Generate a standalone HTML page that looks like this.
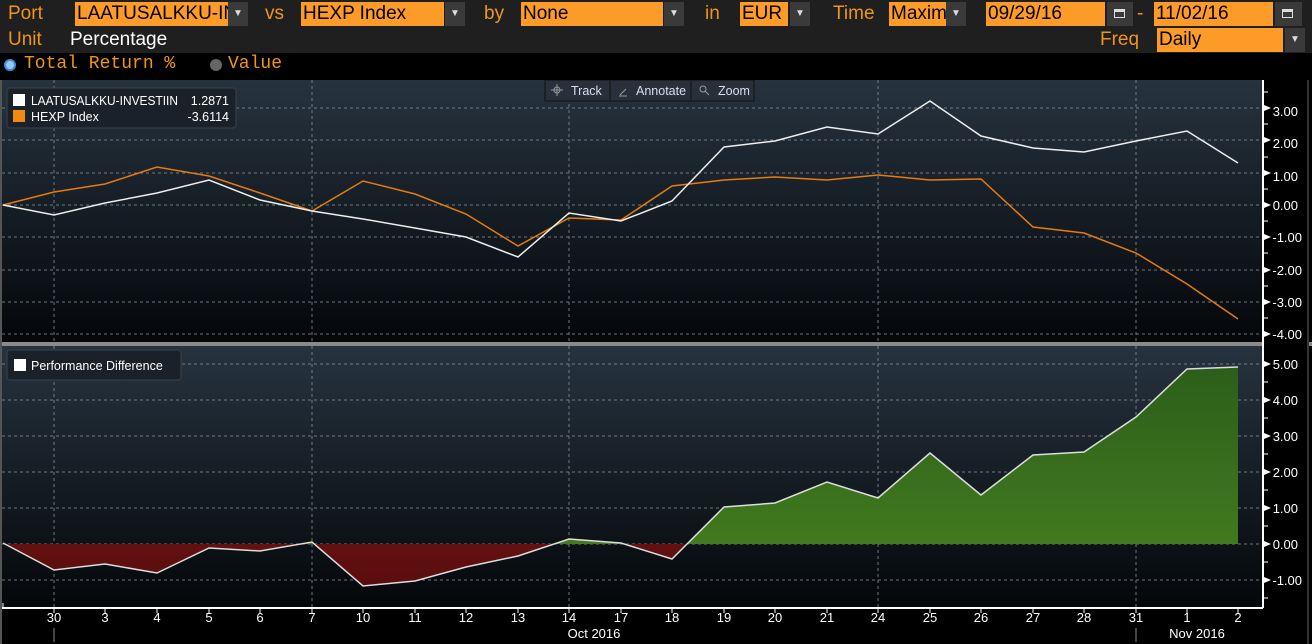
<!DOCTYPE html>
<html><head><meta charset="utf-8"><style>
body{margin:0;width:1312px;height:644px;background:#000;overflow:hidden;font-family:"Liberation Sans",sans-serif;position:relative}
.a{position:absolute}
.lbl{position:absolute;color:#f0951a;font-size:19px;line-height:24px}
.f{position:absolute;background:#fd9b28;color:#000;font-size:19px;line-height:24px;height:24px;padding-left:2px;overflow:hidden;white-space:nowrap}
.b{position:absolute;background:#3a3a3a;height:24px;width:20px;color:#ddd;font-size:10px;text-align:center;line-height:24px}
.cal{position:absolute;left:7px;top:7px;width:11px;height:9px;border:1.5px solid #ddd;border-top-width:3px;box-sizing:border-box}
</style></head><body>
<div class="a" style="left:0;top:0;width:1312px;height:53px;background:#1f1f1f"></div>
<div class="lbl" style="left:8px;top:2px">Port</div>
<div class="f" style="left:75px;top:2px;width:152px">LAATUSALKKU-IN</div><div class="b" style="left:228px;top:2px">▼</div>
<div class="lbl" style="left:265px;top:2px">vs</div>
<div class="f" style="left:301px;top:2px;width:141px">HEXP Index</div><div class="b" style="left:445px;top:2px">▼</div>
<div class="lbl" style="left:484px;top:2px">by</div>
<div class="f" style="left:521px;top:2px;width:140px">None</div><div class="b" style="left:664px;top:2px">▼</div>
<div class="lbl" style="left:705px;top:2px">in</div>
<div class="f" style="left:740px;top:2px;width:46px">EUR</div><div class="b" style="left:790px;top:2px">▼</div>
<div class="lbl" style="left:833px;top:2px">Time</div>
<div class="f" style="left:889px;top:2px;width:55px">Maxim</div><div class="b" style="left:946px;top:2px">▼</div>
<div class="f" style="left:986px;top:2px;width:117px">09/29/16</div><div class="b" style="left:1107px;top:2px;width:26px"><div class="cal"></div></div>
<div class="lbl" style="left:1137px;top:2px">-</div>
<div class="f" style="left:1154px;top:2px;width:117px">11/02/16</div><div class="b" style="left:1275px;top:2px;width:27px"><div class="cal"></div></div>
<div class="lbl" style="left:8px;top:28px">Unit</div>
<div class="a" style="left:70px;top:28px;color:#fff;font-size:19px;line-height:24px">Percentage</div>
<div class="lbl" style="left:1100px;top:28px">Freq</div>
<div class="f" style="left:1157px;top:28px;width:124px">Daily</div><div class="b" style="left:1285px;top:28px">▼</div>
<div class="a" style="left:4px;top:59px;width:8px;height:8px;border:2px solid #3a8fe0;border-radius:50%;background:#9cc8f0"></div>
<div class="lbl" style="left:24px;top:52px;font-family:'Liberation Mono',monospace;font-size:18px">Total Return %</div>
<div class="a" style="left:210px;top:59px;width:12px;height:12px;border-radius:50%;background:#666"></div>
<div class="lbl" style="left:228px;top:52px;font-family:'Liberation Mono',monospace;font-size:18px">Value</div>

<svg class="a" style="left:0;top:80px" width="1312" height="564" viewBox="0 80 1312 564" font-family="Liberation Sans, sans-serif">
<defs>
<linearGradient id="g1" x1="0" y1="0" x2="0" y2="1"><stop offset="0" stop-color="#26333f"/><stop offset="1" stop-color="#04070a"/></linearGradient>
<clipPath id="up"><rect x="0" y="340" width="1300" height="204"/></clipPath>
<clipPath id="dn"><rect x="0" y="544" width="1300" height="70"/></clipPath>
<linearGradient id="gg" x1="0" y1="0" x2="0" y2="1"><stop offset="0" stop-color="#2c5e1a"/><stop offset="1" stop-color="#468020"/></linearGradient>
<linearGradient id="rg" x1="0" y1="0" x2="0" y2="1"><stop offset="0" stop-color="#8a2222"/><stop offset="1" stop-color="#5a0c0c"/></linearGradient>
</defs>
<rect x="2" y="80" width="1261" height="262" fill="url(#g1)"/>
<rect x="2" y="346" width="1261" height="262" fill="url(#g1)"/>
<rect x="0" y="342" width="1312" height="4" fill="#8a8a8a"/>
<rect x="0" y="80" width="2" height="564" fill="#555"/>
<g stroke="#8a9099" stroke-width="1" stroke-dasharray="3,3" opacity="0.8">
<path d="M2 108H1263M2 140H1263M2 173H1263M2 205H1263M2 237H1263M2 270H1263M2 302H1263M2 334H1263"/>
<path d="M2 364H1263M2 400H1263M2 436H1263M2 472H1263M2 508H1263M2 544H1263M2 580H1263"/>
<path d="M54 80V342M312 80V342M569 80V342M878 80V342M1136 80V342M54 346V608M312 346V608M569 346V608M878 346V608M1136 346V608"/>
</g>
<g clip-path="url(#up)"><polygon fill="url(#gg)" points="3,544 3,543 54,570 105,564 157,573 209,548 260,551 312,542 363,586 415,581 466,567 518,556 569,539 621,543 672,559 724,507 775,503 827,482 878,498 930,453 981,495 1033,455 1084,452 1136,417 1187,369 1238,367 1238,544"/></g>
<g clip-path="url(#dn)"><polygon fill="url(#rg)" points="3,544 3,543 54,570 105,564 157,573 209,548 260,551 312,542 363,586 415,581 466,567 518,556 569,539 621,543 672,559 724,507 775,503 827,482 878,498 930,453 981,495 1033,455 1084,452 1136,417 1187,369 1238,367 1238,544"/></g>
<polyline fill="none" stroke="#ddd" stroke-width="1.5" points="3,543 54,570 105,564 157,573 209,548 260,551 312,542 363,586 415,581 466,567 518,556 569,539 621,543 672,559 724,507 775,503 827,482 878,498 930,453 981,495 1033,455 1084,452 1136,417 1187,369 1238,367"/>
<polyline fill="none" stroke="#e87a10" stroke-width="1.5" points="3,205 54,192 105,184 157,167 209,176 260,193 312,211 363,181 415,194 466,214 518,246 569,218 621,220 672,186 724,180 775,177 827,180 878,175 930,180 981,179 1033,227 1084,233 1136,253 1187,284 1238,319"/>
<polyline fill="none" stroke="#eee" stroke-width="1.5" points="3,205 54,215 105,203 157,193 209,180 260,200 312,211 363,219 415,228 466,237 518,257 569,213 621,221 672,201 724,147 775,141 827,127 878,134 930,101 981,136 1033,148 1084,152 1136,141 1187,131 1238,163"/>
<rect x="1264" y="80" width="43" height="564" fill="#000"/>
<rect x="1307" y="80" width="2" height="564" fill="#333"/>
<path d="M1263 80V608M2 608H1263" stroke="#fff" stroke-width="2"/>
<g fill="#fff" font-size="13">
<g stroke="#fff"><path d="M1263 92h5M1263 124h5M1263 157h5M1263 189h5M1263 221h5M1263 253h5M1263 286h5M1263 318h5M1263 382h5M1263 418h5M1263 454h5M1263 490h5M1263 526h5M1263 562h5M1263 598h5"/></g>
<path d="M1264 105l7 3-7 3zM1264 137l7 3-7 3zM1264 170l7 3-7 3zM1264 202l7 3-7 3zM1264 234l7 3-7 3zM1264 267l7 3-7 3zM1264 299l7 3-7 3zM1264 331l7 3-7 3zM1264 361l7 3-7 3zM1264 397l7 3-7 3zM1264 433l7 3-7 3zM1264 469l7 3-7 3zM1264 505l7 3-7 3zM1264 541l7 3-7 3zM1264 577l7 3-7 3z"/>
<g text-anchor="end">
<text x="1298" y="116">3.00</text><text x="1298" y="148">2.00</text><text x="1298" y="181">1.00</text><text x="1298" y="210">0.00</text><text x="1302" y="242">-1.00</text><text x="1302" y="275">-2.00</text><text x="1302" y="307">-3.00</text><text x="1302" y="339">-4.00</text>
<text x="1298" y="369">5.00</text><text x="1298" y="405">4.00</text><text x="1298" y="441">3.00</text><text x="1298" y="477">2.00</text><text x="1298" y="513">1.00</text><text x="1298" y="549">0.00</text><text x="1302" y="585">-1.00</text>
</g>
</g>
<g stroke="#fff"><path d="M3 608v-5M54 608v5M105 608v5M157 608v5M209 608v5M260 608v5M312 608v5M363 608v5M415 608v5M466 608v5M518 608v5M569 608v5M621 608v5M672 608v5M724 608v5M775 608v5M827 608v5M878 608v5M930 608v5M981 608v5M1033 608v5M1084 608v5M1136 608v5M1187 608v5M1238 608v5"/></g>
<path d="M54 628V642M1136 628V642" stroke="#888"/>
<g fill="#fff" font-size="13" text-anchor="middle">
<text x="54" y="622">30</text><text x="105" y="622">3</text><text x="157" y="622">4</text><text x="209" y="622">5</text><text x="260" y="622">6</text><text x="312" y="622">7</text><text x="363" y="622">10</text><text x="415" y="622">11</text><text x="466" y="622">12</text><text x="518" y="622">13</text><text x="569" y="622">14</text><text x="621" y="622">17</text><text x="672" y="622">18</text><text x="724" y="622">19</text><text x="775" y="622">20</text><text x="827" y="622">21</text><text x="878" y="622">24</text><text x="930" y="622">25</text><text x="981" y="622">26</text><text x="1033" y="622">27</text><text x="1084" y="622">28</text><text x="1136" y="622">31</text><text x="1187" y="622">1</text><text x="1238" y="622">2</text>
<text x="594" y="638">Oct 2016</text><text x="1197" y="638">Nov 2016</text>
</g>
<rect x="7" y="88" width="229" height="40" rx="3" fill="#1a2129" stroke="#3a424a"/>
<rect x="13" y="94" width="12" height="12" fill="#fff"/><rect x="13" y="110" width="12" height="12" fill="#f08a10"/>
<g fill="#fff" font-size="12.5"><text x="31" y="105" textLength="147" lengthAdjust="spacingAndGlyphs">LAATUSALKKU-INVESTIIN</text><text x="229" y="105" text-anchor="end">1.2871</text><text x="31" y="121">HEXP Index</text><text x="229" y="121" text-anchor="end">-3.6114</text></g>
<rect x="7" y="350" width="174" height="30" rx="3" fill="#1a2129" stroke="#3a424a"/>
<rect x="14" y="359" width="12" height="12" fill="#fff"/>
<text x="31" y="370" fill="#fff" font-size="12.5">Performance Difference</text>
<rect x="545" y="80" width="209" height="21" fill="#26313c" stroke="#111"/>
<path d="M610 81v19M691 81v19" stroke="#111"/>
<g fill="#dde" font-size="12.5"><text x="571" y="95">Track</text><text x="636" y="95">Annotate</text><text x="718" y="95">Zoom</text></g>
<g stroke="#999" fill="none"><circle cx="557" cy="90" r="3"/><path d="M551 90h12M557 84v12M620 95l6-6M619 96h8"/><circle cx="703" cy="89" r="3"/><path d="M705 91l4 4"/></g>
</svg>
</body></html>
